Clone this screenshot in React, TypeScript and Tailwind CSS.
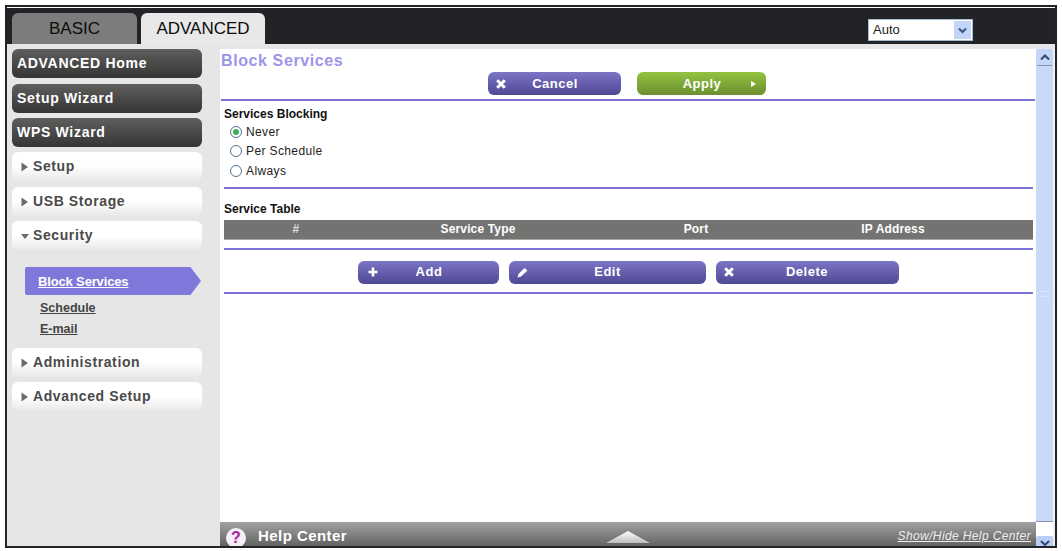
import React from "react";

const Arrow = ({ down }: { down?: boolean }) => (
  <svg width="10" height="10" viewBox="0 0 10 10" className="shrink-0">
    {down ? <path d="M1 3 L9 3 L5 8 Z" fill="#6b6b6b" /> : <path d="M1.5 0.5 L8 5 L1.5 9.5 Z" fill="#6b6b6b" />}
  </svg>
);

const XIcon = () => (
  <svg width="10" height="10" viewBox="0 0 10 10" className="shrink-0">
    <path d="M1.2 1.2 L8.8 8.8 M8.8 1.2 L1.2 8.8" stroke="#fff" strokeWidth="3" />
  </svg>
);
const PlusIcon = () => (
  <svg width="10" height="10" viewBox="0 0 10 10" className="shrink-0 ml-[2px]">
    <path d="M5 0.5 V9.5 M0.5 5 H9.5" stroke="#fff" strokeWidth="2.6" />
  </svg>
);
const PenIcon = () => (
  <svg width="11" height="11" viewBox="0 0 11 11" className="shrink-0">
    <path d="M0.5 10.5 L1.5 7 L7.5 1 L10.5 3.5 L4 9.5 Z" fill="#fff" />
  </svg>
);

const Dark = ({ label, cls }: { label: string; cls: string }) => (
  <div className={`w-[190px] h-[29px] rounded-[6px] bg-gradient-to-b from-[#5f5f5e] to-[#353535] flex items-center pl-[5px] text-white font-bold text-[14px] tracking-[0.7px] ${cls}`}>
    {label}
  </div>
);

const Light = ({ label, cls, down }: { label: string; cls: string; down?: boolean }) => (
  <div className={`w-[190px] h-[29px] rounded-[6px] bg-gradient-to-b from-[#ffffff] via-[#ffffff] to-[#e9e8e8] flex items-center pl-[8px] gap-[3px] text-[#4a4a4a] font-bold text-[14px] tracking-[0.6px] ${cls}`}>
    <Arrow down={down} />
    {label}
  </div>
);

const Radio = ({ label, on }: { label: string; on?: boolean }) => (
  <div className="h-[19.5px] flex items-center gap-[4px] pl-[6px] text-[12px] tracking-[0.38px] text-[#222]">
    <span className="w-[12px] h-[12px] rounded-full border border-[#52708f] bg-white flex items-center justify-center">
      {on && <span className="w-[6px] h-[6px] rounded-full bg-[#3fae5a]" />}
    </span>
    {label}
  </div>
);

const Btn = ({ w, label, icon, labelW }: { w: string; label: string; icon: React.ReactNode; labelW: string }) => (
  <div className={`${w} h-[23px] rounded-[6px] bg-gradient-to-b from-[#7d75c6] to-[#4f4894] flex items-center pl-[8px] text-white font-bold text-[13px] tracking-[0.5px]`}>
    {icon}
    <span className={`${labelW} text-center`}>{label}</span>
  </div>
);

const Hr = ({ cls }: { cls: string }) => <div className={`h-[2px] bg-[#7a72d6] ${cls}`} />;

export default function App() {
  return (
    <div className="w-[1062px] h-[551px] bg-white pt-[5px] pl-[5px] font-['Liberation_Sans',Arial,sans-serif]">
      <div className="w-[1052px] h-[543px] border-2 border-[#232427] flex flex-col overflow-hidden">
        <div className="h-[1px] bg-white shrink-0" />
        <div className="h-[36px] shrink-0 bg-[#212326] flex items-end pl-[5px] relative">
          <div className="w-[125px] h-[31px] rounded-t-[6px] bg-[#7b7c7b] flex items-center justify-center text-[17px] text-[#0c0c0c]">BASIC</div>
          <div className="ml-[4px] w-[124px] h-[31px] rounded-t-[6px] bg-[#e8e8e8] flex items-center justify-center text-[17px] text-[#0c0c0c]">ADVANCED</div>
          <div className="ml-auto mr-[82px] mb-[3px] w-[105px] h-[22px] bg-white border border-[#a9bdd0] flex items-center pl-[4px] text-[13px] text-[#222]">
            Auto
            <span className="ml-auto mr-[1px] w-[17px] h-[18px] bg-[#c3d5f8] flex items-center justify-center">
              <svg width="9" height="7" viewBox="0 0 9 7"><path d="M1 1.5 L4.5 5 L8 1.5" fill="none" stroke="#3b5480" strokeWidth="2" /></svg>
            </span>
          </div>
        </div>
        <div className="flex-1 flex min-h-0">
          <aside className="w-[213px] shrink-0 bg-[#e6e6e6] pt-[5px] pl-[5px]">
            <Dark label="ADVANCED Home" cls="" />
            <Dark label="Setup Wizard" cls="mt-[6px]" />
            <Dark label="WPS Wizard" cls="mt-[5px]" />
            <Light label="Setup" cls="mt-[5px]" />
            <Light label="USB Storage" cls="mt-[6px]" />
            <Light label="Security" cls="mt-[5px]" down />
            <div className="mt-[17px] ml-[13px] w-[176px] h-[28px] pt-[1px] bg-[#7f78da] flex items-center pl-[13px] text-white underline font-bold text-[13px] tracking-[-0.15px] rounded-l-[2px] [clip-path:polygon(0_0,94%_0,100%_50%,94%_100%,0_100%)]">Block Services</div>
            <div className="ml-[28px] mt-[3px] text-[12.5px] font-bold text-[#444] underline leading-[21px]">Schedule</div>
            <div className="ml-[28px] text-[12.5px] font-bold text-[#444] underline leading-[21px]">E-mail</div>
            <Light label="Administration" cls="mt-[8px]" />
            <Light label="Advanced Setup" cls="mt-[5px]" />
          </aside>
          <div className="flex-1 min-w-0 flex flex-col">
            <div className="h-[5px] shrink-0 bg-[#e6e6e6]" />
            <div className="flex-1 min-h-0 flex">
              <div className="w-[816px] shrink-0 flex flex-col bg-white">
                <div className="flex-1 min-h-0 pl-[1px]">
                  <div className="h-[23px] flex items-center text-[#9d95e8] font-bold text-[16px] tracking-[0.6px]">Block Services</div>
                  <div className="h-[23px] flex ml-[267px] gap-[16px]">
                    <Btn w="w-[133px]" label="Cancel" icon={<XIcon />} labelW="w-[98px]" />
                    <div className="w-[129px] h-[23px] rounded-[6px] bg-gradient-to-b from-[#93c340] to-[#6d9030] flex items-center pl-[10px] text-white font-bold text-[13px] tracking-[0.5px]">
                      <span className="w-[110px] text-center">Apply</span>
                      <svg width="7" height="8" viewBox="0 0 7 8" className="-ml-[7px]"><path d="M1 1 L6 4 L1 7 Z" fill="#fff" /></svg>
                    </div>
                  </div>
                  <Hr cls="mt-[4px] mr-[1px]" />
                  <div className="pl-[3px]">
                    <div className="mt-[4px] h-[17px] flex items-center text-[12px] font-bold text-[#111]">Services Blocking</div>
                    <Radio label="Never" on />
                    <Radio label="Per Schedule" />
                    <Radio label="Always" />
                    <Hr cls="mt-[6px] mr-[3px]" />
                    <div className="mt-[12px] h-[16px] flex items-center text-[12px] font-bold text-[#111]">Service Table</div>
                    <div className="mt-[3px] mr-[3px] h-[20px] bg-[#737372] border-b border-[#a8a8a8] grid grid-cols-[144px_220px_216px_178px] text-center items-center text-white font-bold text-[12px] tracking-[0.15px]">
                      <span className="text-[#ddd]">#</span>
                      <span>Service Type</span>
                      <span>Port</span>
                      <span>IP Address</span>
                    </div>
                    <Hr cls="mt-[8px] mr-[3px]" />
                    <div className="mt-[11px] h-[23px] flex pl-[134px] gap-[10px]">
                      <Btn w="w-[141px]" label="Add" icon={<PlusIcon />} labelW="w-[102px]" />
                      <Btn w="w-[197px]" label="Edit" icon={<PenIcon />} labelW="w-[159px]" />
                      <Btn w="w-[183px]" label="Delete" icon={<XIcon />} labelW="w-[146px]" />
                    </div>
                    <Hr cls="mt-[8px] mr-[3px]" />
                  </div>
                </div>
                <div className="h-[24px] shrink-0 bg-gradient-to-b from-[#a3a3a3] to-[#626262] flex items-center pl-[6px] relative overflow-hidden">
                  <span className="w-[20px] h-[20px] mt-[8px] rounded-full bg-[#f6eef6] flex items-center justify-center text-[#a5239f] font-bold text-[16px] shrink-0">?</span>
                  <span className="ml-[12px] mt-[5px] text-white font-bold text-[15px] tracking-[0.45px]">Help Center</span>
                  <svg width="44" height="13" viewBox="0 0 44 13" className="absolute left-[386px] bottom-[3px]">
                    <defs><linearGradient id="tri" x1="0" y1="0" x2="0" y2="1"><stop offset="0" stopColor="#ffffff" /><stop offset="1" stopColor="#bdbdbd" /></linearGradient></defs>
                    <path d="M0 13 L22 1 L44 13 Z" fill="url(#tri)" />
                  </svg>
                  <span className="ml-auto mr-[5px] mt-[3px] text-[12px] italic underline text-[#eee] tracking-[0.38px]">Show/Hide Help Center</span>
                </div>
              </div>
              <div className="w-[17px] shrink-0 flex flex-col bg-white">
                <div className="h-[17px] shrink-0 rounded-[2px] bg-[#c3d5f8] border-b border-[#7f95b8] flex items-center justify-center">
                  <svg width="10" height="7" viewBox="0 0 10 7"><path d="M1 5.5 L5 1.5 L9 5.5" fill="none" stroke="#33486e" strokeWidth="2" /></svg>
                </div>
                <div className="flex-1 bg-[#c8d9fa] border-b border-[#7f95b8] flex items-center justify-center">
                  <div className="w-[8px] h-[6px] border-y border-[#dbe6fb]" />
                </div>
                <div className="h-[14px] shrink-0" />
                <div className="h-[10px] shrink-0 rounded-t-[2px] bg-[#b9cdf5] flex items-end justify-center">
                  <svg width="10" height="6" viewBox="0 0 10 6"><path d="M1 1 L5 5 L9 1" fill="none" stroke="#33486e" strokeWidth="2" /></svg>
                </div>
              </div>
              <div className="flex-1 bg-[#f0f0f0]" />
            </div>
          </div>
        </div>
      </div>
    </div>
  );
}
